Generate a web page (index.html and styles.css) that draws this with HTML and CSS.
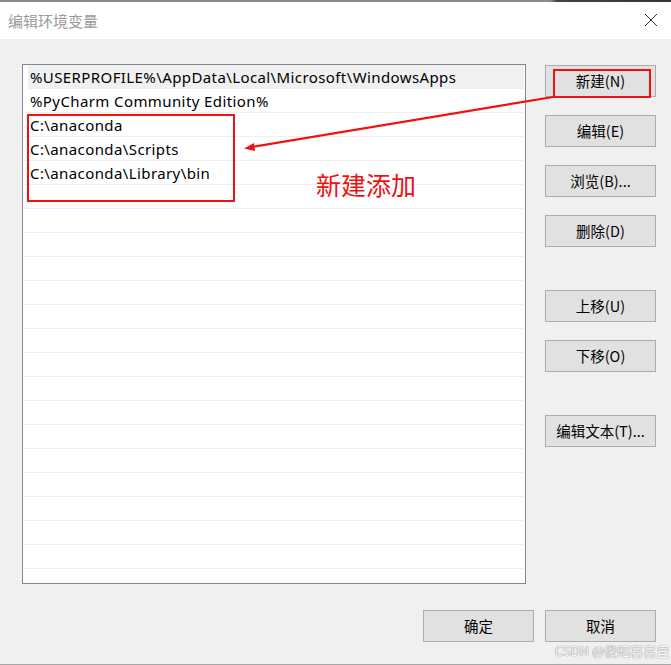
FILE: index.html
```html
<!DOCTYPE html>
<html lang="zh-CN">
<head>
<meta charset="utf-8">
<title>编辑环境变量</title>
<link rel="stylesheet" href="styles.css">
</head>
<body>
<div class="window">
  <div class="topline"></div>
  <div class="titlebar">
    <span class="title">编辑环境变量</span>
    <svg class="close" width="14" height="14" viewBox="0 0 14 14"><path d="M1 1 L13 13 M13 1 L1 13" stroke="#333" stroke-width="1" fill="none"/></svg>
  </div>
  <div class="main">
    <div class="list">
      <div class="row sel">%USERPROFILE%\AppData\Local\Microsoft\WindowsApps</div>
      <div class="row">%PyCharm Community Edition%</div>
      <div class="row">C:\anaconda</div>
      <div class="row">C:\anaconda\Scripts</div>
      <div class="row">C:\anaconda\Library\bin</div>
      <div class="row"></div><div class="row"></div><div class="row"></div><div class="row"></div>
      <div class="row"></div><div class="row"></div><div class="row"></div><div class="row"></div>
      <div class="row"></div><div class="row"></div><div class="row"></div><div class="row"></div>
      <div class="row"></div><div class="row"></div><div class="row"></div><div class="row"></div>
      <div class="row"></div>
    </div>
    <div class="side">
      <div class="group">
        <button class="btn">新建(N)</button>
        <button class="btn">编辑(E)</button>
        <button class="btn">浏览(B)...</button>
        <button class="btn">删除(D)</button>
      </div>
      <div class="group">
        <button class="btn">上移(U)</button>
        <button class="btn">下移(O)</button>
      </div>
      <div class="group">
        <button class="btn">编辑文本(T)...</button>
      </div>
    </div>
  </div>
  <div class="footer">
    <button class="btn">确定</button>
    <button class="btn">取消</button>
  </div>
  <div class="bottomline"></div>

  <svg class="annot" width="671" height="665" viewBox="0 0 671 665">
    <rect x="28" y="115" width="206" height="86" fill="none" stroke="#f01010" stroke-width="2"/>
    <rect x="554" y="70" width="96" height="27" fill="none" stroke="#f01010" stroke-width="2"/>
    <line x1="553" y1="97" x2="252" y2="147" stroke="#f01010" stroke-width="2.2"/>
    <polygon points="244,148.5 254,143 255,151" fill="#f01010"/>
  </svg>
  <div class="note">新建添加</div>
  <div class="watermark">CSDN @俊昭喜喜里</div>
</div>
</body>
</html>
```
FILE: styles.css
```css
* { box-sizing: border-box; }
html, body { margin: 0; padding: 0; }
body {
  width: 671px;
  height: 665px;
  background: #f0f0f0;
  font-family: "Noto Sans", "Noto Sans CJK SC", sans-serif;
  overflow: hidden;
}
.window {
  position: relative;
  width: 671px;
  height: 665px;
  display: flex;
  flex-direction: column;
}
.topline {
  height: 2px;
  background: linear-gradient(to right, #8a8a8a 0%, #8a8a8a 82%, #4a4238 83%, #3a342c 100%);
}
.titlebar {
  height: 37px;
  background: #ffffff;
  display: flex;
  align-items: center;
  justify-content: space-between;
  padding: 0 13px 0 8px;
}
.title {
  font-family: "Noto Sans CJK SC", sans-serif;
  font-size: 15px;
  color: #9a9a9a;
  margin-top: -1px;
}
.close { display: block; margin-top: -1px; }
.main {
  display: flex;
  padding: 25px 0 0 22px;
}
.list {
  width: 504px;
  height: 520px;
  border: 1px solid #828790;
  background: #ffffff;
  padding: 0 1px;
  overflow: hidden;
}
.row {
  height: 24px;
  border-bottom: 1px solid #f0f0f0;
  font-family: "Noto Sans", "Noto Sans CJK SC", sans-serif;
  font-size: 15px;
  letter-spacing: 0.4px;
  line-height: 25px;
  color: #000;
  padding-left: 6px;
  white-space: nowrap;
}
.row.sel {
  background: #f0f0f0;
  margin-left: 4px;
  padding-left: 2px;
}
.side {
  margin-left: 19px;
  padding-top: 1px;
  display: flex;
  flex-direction: column;
  gap: 43px;
}
.group {
  display: flex;
  flex-direction: column;
  gap: 18px;
}
.btn {
  width: 111px;
  height: 32px;
  background: #e1e1e1;
  border: 1px solid #adadad;
  border-radius: 0;
  padding: 0 0 1px 0;
  margin: 0;
  font-family: "Noto Sans CJK SC", sans-serif;
  font-size: 14.5px;
  color: #000;
  display: flex;
  align-items: center;
  justify-content: center;
}
.footer {
  display: flex;
  justify-content: flex-end;
  gap: 11px;
  padding: 26px 15px 0 0;
}
.footer .btn { width: 111px; }
.bottomline {
  margin-top: auto;
  height: 1px;
  background: #a8a8a8;
}
.annot {
  position: absolute;
  left: 0;
  top: 0;
  pointer-events: none;
}
.note {
  position: absolute;
  left: 316px;
  top: 169px;
  font-family: "Noto Sans CJK SC", sans-serif;
  font-size: 25px;
  color: #f01010;
  line-height: 30px;
}
.watermark {
  position: absolute;
  left: 555px;
  top: 643px;
  font-family: "Noto Sans CJK SC", sans-serif;
  font-size: 13px;
  color: #f8f8f8;
  text-shadow: 0 0 1px #8a8a8a, 0 0 1px #8a8a8a;
  line-height: 16px;
  white-space: nowrap;
}
```
